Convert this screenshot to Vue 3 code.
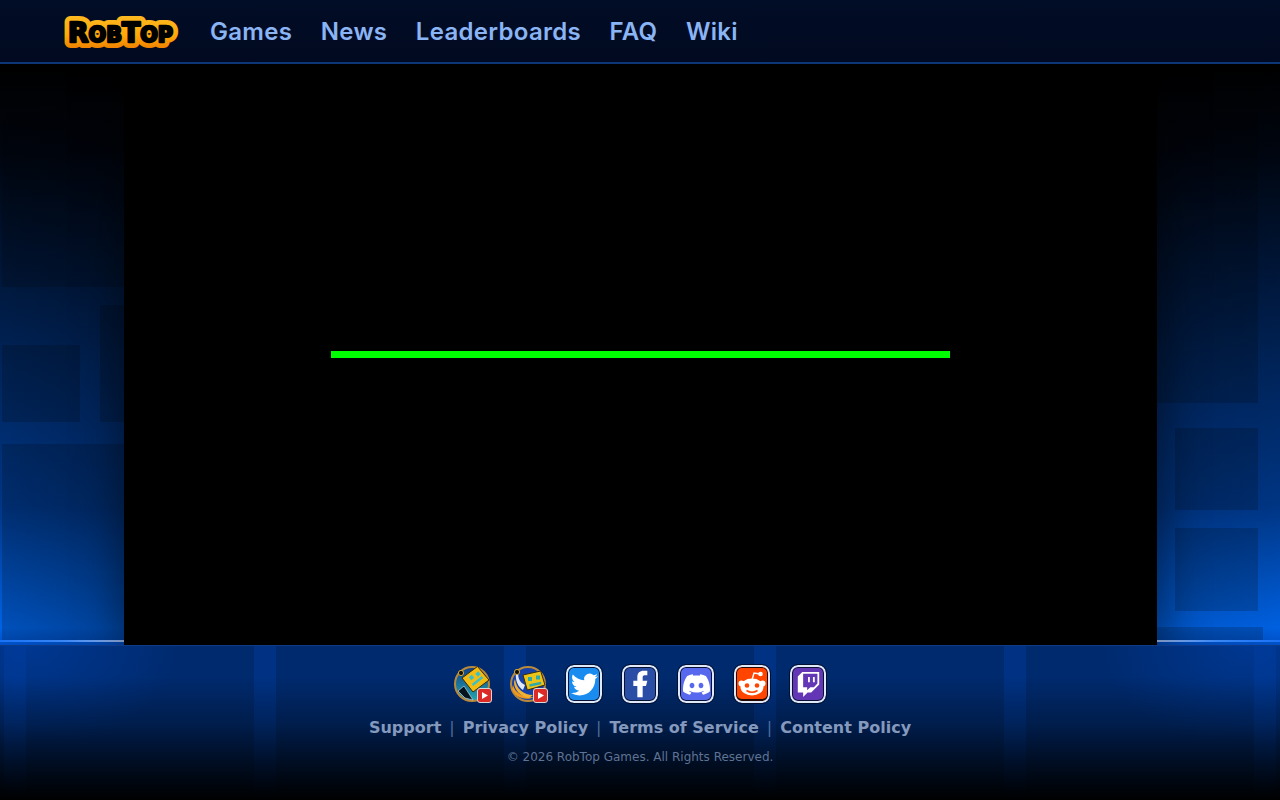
<script setup>
const navItems = ['Games', 'News', 'Leaderboards', 'FAQ', 'Wiki']
const footerLinks = ['Support', 'Privacy Policy', 'Terms of Service', 'Content Policy']
</script>

<template>
  <div class="page">
    <header class="topbar">
      <a class="logo" href="#" aria-label="RobTop">
        <svg width="116" height="38" viewBox="0 0 116 38">
          <defs>
            <linearGradient id="logoFill" x1="0" y1="0" x2="0" y2="1">
              <stop offset="0" stop-color="#ffb81f" />
              <stop offset="0.6" stop-color="#ffa908" />
              <stop offset="1" stop-color="#f08400" />
            </linearGradient>
          </defs>
          <text class="logo-text logo-outline" x="57.5" y="29.5" text-anchor="middle" textLength="105" lengthAdjust="spacingAndGlyphs"><tspan class="cap">R</tspan>OB<tspan class="cap">T</tspan>OP</text>
          <text class="logo-text" x="57.5" y="29.5" text-anchor="middle" textLength="105" lengthAdjust="spacingAndGlyphs"><tspan class="cap">R</tspan>OB<tspan class="cap">T</tspan>OP</text>
        </svg>
      </a>
      <nav class="nav">
        <a v-for="item in navItems" :key="item" href="#">{{ item }}</a>
      </nav>
    </header>

    <main class="stage">
      <div class="game">
        <div class="loadbar"></div>
      </div>
    </main>

    <footer class="foot">
      <div class="socials">
        <!-- youtube channel badges -->
        <a class="round" href="#">
          <svg width="39" height="38" viewBox="0 0 39 38">
            <defs>
              <linearGradient id="ch1" x1="0" y1="0" x2="0" y2="1">
                <stop offset="0" stop-color="#123f86" />
                <stop offset="1" stop-color="#22a8b0" />
              </linearGradient>
            </defs>
            <circle cx="19" cy="19" r="17" fill="url(#ch1)" stroke="#b8893a" stroke-width="2" />
            <path d="M5 26 L11 21 L20 35 L12 33 Z" fill="#06141f" stroke="#dfe8f4" stroke-width=".6" />
            <path d="M24.5 1.5 L36 15 L20 27 L9 13 Z" fill="#f4bc10" stroke="#3a2c08" stroke-width="1" />
            <rect x="16.5" y="10.5" width="4" height="4" fill="#3cc0c8" transform="rotate(-40 18.5 12.5)" />
            <rect x="23" y="7" width="4" height="4" fill="#3cc0c8" transform="rotate(-40 25 9)" />
            <path d="M19.5 20 L29.5 12" stroke="#3cc0c8" stroke-width="2.4" />
            <circle cx="8" cy="8" r="2.6" fill="#111" stroke="#d8a830" />
            <rect x="24.5" y="23.5" width="14" height="14" rx="2.5" fill="#dc2a26" stroke="#d8d8d8" />
            <path d="M29 27 L35 30.5 L29 34 Z" fill="#fff" />
          </svg>
        </a>
        <a class="round" href="#">
          <svg width="39" height="38" viewBox="0 0 39 38">
            <circle cx="19" cy="19" r="17" fill="#1540a8" stroke="#b8893a" stroke-width="2" />
            <path d="M10 5 C8 12 10 17 16 20 L14 25 C9 22 6 15 7 8 Z" fill="#dfe8f4" />
            <path d="M4 20 C6 28 14 33 26 32 C17 36 6 33 3 24 Z" fill="#f09a1c" />
            <path d="M6 14 C7 24 15 30 24 30 L20 33 C12 32 5 25 5 17 Z" fill="#f2b030" />
            <path d="M14 10 L31.7 6 L36 20 L18.3 25 Z" fill="#ecc417" stroke="#3a2c08" stroke-width="1" />
            <rect x="19" y="12" width="4" height="4" fill="#2fa8a8" />
            <rect x="27" y="10.5" width="4" height="4" fill="#2fa8a8" />
            <path d="M20.5 20.5 L32 18" stroke="#2fa8a8" stroke-width="2.4" />
            <circle cx="8" cy="7" r="2.6" fill="#111" stroke="#d8a830" />
            <rect x="24.5" y="23.5" width="14" height="14" rx="2.5" fill="#dc2a26" stroke="#d8d8d8" />
            <path d="M29 27 L35 30.5 L29 34 Z" fill="#fff" />
          </svg>
        </a>
        <a class="tile tw" href="#">
          <svg width="27" height="27" viewBox="0 0 24 24" fill="#fff"><path d="M23.953 4.57a10 10 0 01-2.825.775 4.958 4.958 0 002.163-2.723c-.951.555-2.005.959-3.127 1.184a4.92 4.92 0 00-8.384 4.482C7.69 8.095 4.067 6.13 1.64 3.162a4.822 4.822 0 00-.666 2.475c0 1.71.87 3.213 2.188 4.096a4.904 4.904 0 01-2.228-.616v.06a4.923 4.923 0 003.946 4.827 4.996 4.996 0 01-2.212.085 4.936 4.936 0 004.604 3.417 9.867 9.867 0 01-6.102 2.105c-.39 0-.779-.023-1.17-.067a13.995 13.995 0 007.557 2.209c9.053 0 13.998-7.496 13.998-13.985 0-.21 0-.42-.015-.63A9.935 9.935 0 0024 4.59z" /></svg>
        </a>
        <a class="tile fb" href="#">
          <svg width="32" height="32" viewBox="0 0 24 24" fill="#fff"><path d="M14 13.5h2.5l1-4H14v-2c0-1.03 0-2 2-2h1.5V2.14c-.326-.043-1.557-.14-2.857-.14C11.928 2 10 3.657 10 6.7v2.8H7v4h3V22h4v-8.5z" /></svg>
        </a>
        <a class="tile dc" href="#">
          <svg width="27" height="27" viewBox="0 0 24 24" fill="#fff"><path d="M20.317 4.3698a19.7913 19.7913 0 00-4.8851-1.5152.0741.0741 0 00-.0785.0371c-.211.3753-.4447.8648-.6083 1.2495-1.8447-.2762-3.68-.2762-5.4868 0-.1636-.3933-.4058-.8742-.6177-1.2495a.077.077 0 00-.0785-.037 19.7363 19.7363 0 00-4.8852 1.515.0699.0699 0 00-.0321.0277C.5334 9.0458-.319 13.5799.0992 18.0578a.0824.0824 0 00.0312.0561c2.0528 1.5076 4.0413 2.4228 5.9929 3.0294a.0777.0777 0 00.0842-.0276c.4616-.6304.8731-1.2952 1.226-1.9942a.076.076 0 00-.0416-.1057c-.6528-.2476-1.2743-.5495-1.8722-.8923a.077.077 0 01-.0076-.1277c.1258-.0943.2517-.1923.3718-.2914a.0743.0743 0 01.0776-.0105c3.9278 1.7933 8.18 1.7933 12.0614 0a.0739.0739 0 01.0785.0095c.1202.099.246.1981.3728.2924a.077.077 0 01-.0066.1276 12.2986 12.2986 0 01-1.873.8914.0766.0766 0 00-.0407.1067c.3604.698.7719 1.3628 1.225 1.9932a.076.076 0 00.0842.0286c1.961-.6067 3.9495-1.5219 6.0023-3.0294a.077.077 0 00.0313-.0552c.5004-5.177-.8382-9.6739-3.5485-13.6604a.061.061 0 00-.0312-.0286zM8.02 15.3312c-1.1825 0-2.1569-1.0857-2.1569-2.419 0-1.3332.9555-2.4189 2.157-2.4189 1.2108 0 2.1757 1.0952 2.1568 2.419 0 1.3332-.9555 2.4189-2.1569 2.4189zm7.9748 0c-1.1825 0-2.1569-1.0857-2.1569-2.419 0-1.3332.9554-2.4189 2.1569-2.4189 1.2108 0 2.1757 1.0952 2.1568 2.419 0 1.3332-.946 2.4189-2.1568 2.4189Z" /></svg>
        </a>
        <a class="tile rd" href="#">
          <svg width="30" height="32" viewBox="0 0 30 32">
            <path d="M15 12 L17 5 L23 6" fill="none" stroke="#fff" stroke-width="1.4" />
            <circle cx="23.5" cy="6" r="2.3" fill="#fff" />
            <circle cx="4.5" cy="15.5" r="3" fill="#fff" />
            <circle cx="25.5" cy="15.5" r="3" fill="#fff" />
            <ellipse cx="15" cy="19" rx="11.5" ry="8.5" fill="#fff" />
            <circle cx="10" cy="17.5" r="2.3" fill="#ff4500" />
            <circle cx="20" cy="17.5" r="2.3" fill="#ff4500" />
            <path d="M9.5 22.5 Q15 26 20.5 22.5" fill="none" stroke="#ff4500" stroke-width="1.5" />
          </svg>
        </a>
        <a class="tile tv" href="#">
          <svg width="25" height="25" viewBox="0 0 24 24" fill="#fff"><path d="M11.571 4.714h1.715v5.143H11.57zm4.715 0H18v5.143h-1.714zM6 0L1.714 4.286v15.428h5.143V24l4.286-4.286h3.428L22.286 12V0zm14.571 11.143l-3.428 3.428h-3.429l-3 3v-3H6.857V1.714h13.714Z" /></svg>
        </a>
      </div>
      <div class="links">
        <template v-for="(link, i) in footerLinks" :key="link">
          <span v-if="i > 0" class="sep">|</span>
          <a href="#">{{ link }}</a>
        </template>
      </div>
      <p class="copy">© 2026 RobTop Games. All Rights Reserved.</p>
    </footer>
  </div>
</template>

<style>
html,
body {
  margin: 0;
  background: #000;
}
</style>

<style scoped>
.page {
  height: 800px;
  display: flex;
  flex-direction: column;
  overflow: hidden;
  font-family: "DejaVu Sans", sans-serif;
}

.topbar {
  height: 62px;
  display: flex;
  align-items: center;
  gap: 31px;
  padding-left: 63px;
  background: linear-gradient(#010c26, #010a20);
  border-bottom: 2px solid #0c3678;
}

.logo {
  display: block;
  height: 38px;
}

.logo-text {
  font-family: "DejaVu Sans", sans-serif;
  font-weight: 700;
  font-size: 21px;
  fill: #000;
  stroke: #000;
  stroke-width: 2.4px;
  stroke-linejoin: round;
}

.logo-outline {
  fill: url(#logoFill);
  stroke: url(#logoFill);
  stroke-width: 12px;
}

.cap {
  font-size: 27px;
}

.nav {
  display: flex;
  gap: 28.5px;
}

.nav a {
  font-family: Inter, sans-serif;
  font-weight: 600;
  font-size: 24px;
  letter-spacing: .3px;
  color: #8ab4f4;
  text-decoration: none;
}

.stage {
  flex: 1;
  display: flex;
  justify-content: center;
  background-color: #000;
  background-image:
    linear-gradient(to right, #1a72f4, #3a86f4 5%, #9ab8ec 9.7%, transparent 9.7%, transparent 90.4%, #9ab8ec 90.4%, #3a86f4 95%, #1a72f4),
    linear-gradient(rgba(0, 0, 0, .18), rgba(0, 0, 0, .18)),
    linear-gradient(rgba(0, 0, 0, .18), rgba(0, 0, 0, .18)),
    linear-gradient(rgba(0, 0, 0, .18), rgba(0, 0, 0, .18)),
    linear-gradient(rgba(0, 0, 0, .18), rgba(0, 0, 0, .18)),
    linear-gradient(rgba(0, 0, 0, .18), rgba(0, 0, 0, .18)),
    linear-gradient(rgba(0, 0, 0, .18), rgba(0, 0, 0, .18)),
    linear-gradient(rgba(0, 0, 0, .18), rgba(0, 0, 0, .18)),
    linear-gradient(rgba(0, 0, 0, .18), rgba(0, 0, 0, .18)),
    linear-gradient(to right, rgba(0, 0, 0, 0), rgba(0, 0, 0, .12) 6%, rgba(0, 0, 0, .12) 91%, rgba(0, 0, 0, .02)),
    linear-gradient(#000 0, #00050f 15%, #00245a 52%, #003686 76%, #0062e4 97%, #0050c8 100%);
  background-size:
    100% 2px,
    122px 223px, 78px 77px, 24px 117px, 122px 196px,
    101px 339px, 83px 82px, 83px 83px, 106px 13px,
    100% 100%, 100% 100%;
  background-position:
    0 576px,
    2px 0, 2px 281px, 100px 241px, 2px 380px,
    1157px 0, 1175px 364px, 1175px 464px, 1157px 563px,
    0 0, 0 0;
  background-repeat: no-repeat;
}

.game {
  width: 1033px;
  height: 581px;
  flex-shrink: 0;
  background: #000;
  box-shadow: 0 0 40px 8px rgba(0, 0, 0, .45);
  display: flex;
  align-items: center;
  justify-content: center;
  clip-path: inset(0 -60px 0 -60px);
}

.loadbar {
  width: 619px;
  height: 7px;
  margin-left: 1px;
  background: #00ff00;
}

.foot {
  height: 154px;
  border-top: 1px solid #0f3a86;
  display: flex;
  flex-direction: column;
  align-items: center;
  background:
    linear-gradient(transparent 20%, rgba(0, 0, 0, .3) 50%, rgba(0, 0, 0, .72) 78%, #000 100%),
    repeating-linear-gradient(90deg, transparent 0 4px, rgba(0, 64, 170, .35) 4px 26px, transparent 26px 250px),
    radial-gradient(150px 100px at 30px 0, rgba(0, 80, 210, .35), transparent),
    radial-gradient(150px 100px at 1250px 0, rgba(0, 80, 210, .35), transparent),
    #002a6e;
}

.socials {
  display: flex;
  gap: 18px;
  margin-top: 19px;
}

.round {
  display: block;
  width: 38px;
  height: 38px;
}

.tile {
  box-sizing: border-box;
  width: 36px;
  height: 38px;
  margin: 0 1px;
  display: flex;
  align-items: center;
  justify-content: center;
  border: 2px solid #dfe8f8;
  outline: 1px solid #001030;
  box-shadow: inset 0 0 0 1px #061230;
  border-radius: 8px;
}

.tw { background: #1a8cf0; }
.fb { background: #2a4ea6; }
.dc { background: #5868ee; }
.rd { background: #ff4500; box-shadow: inset 0 0 0 1px #240800, inset 0 -2px 0 #240800; }
.tv { background: #6236b4; }

.links {
  display: flex;
  align-items: center;
  gap: 8px;
  margin-top: 15px;
  font-size: 16px;
  font-weight: 700;
  color: #8499bd;
}

.links a {
  color: inherit;
  text-decoration: none;
}

.sep {
  font-weight: 400;
  color: #4f6c9c;
}

.copy {
  margin: 13px 0 0;
  font-size: 12px;
  color: #5f7394;
}
</style>
